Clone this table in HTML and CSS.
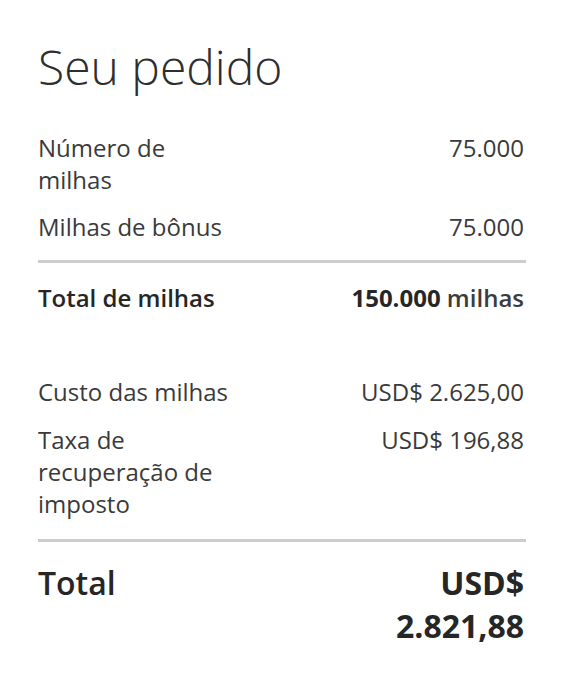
FILE: index.html
```html
<!DOCTYPE html>
<html lang="pt">
<head>
<meta charset="utf-8">
<link rel="stylesheet" href="styles.css">
</head>
<body>
<div class="order">
  <h1 class="title">Seu pedido</h1>
  <div class="group">
    <div class="row">
      <div class="label">Número de milhas</div>
      <div class="value">75.000</div>
    </div>
    <div class="row">
      <div class="label">Milhas de bônus</div>
      <div class="value">75.000</div>
    </div>
  </div>
  <hr class="divider">
  <div class="row row-strong">
    <div class="label">Total de milhas</div>
    <div class="value"><span class="num">150.000</span> <span class="unit">milhas</span></div>
  </div>
  <div class="group group-cost">
    <div class="row">
      <div class="label">Custo das milhas</div>
      <div class="value">USD$ 2.625,00</div>
    </div>
    <div class="row">
      <div class="label">Taxa de recuperação de imposto</div>
      <div class="value">USD$ 196,88</div>
    </div>
  </div>
  <hr class="divider">
  <div class="row row-total">
    <div class="label">Total</div>
    <div class="value">USD$ 2.821,88</div>
  </div>
</div>
</body>
</html>
```
FILE: styles.css
```css
html, body {
  margin: 0;
  padding: 0;
  background: #ffffff;
}
body {
  font-family: "Open Sans", "Noto Sans", sans-serif;
  color: #3a3a3a;
}
.order {
  width: 488px;
  padding: 38px 0 0 38px;
}
.title {
  margin: 0;
  font-size: 48px;
  line-height: 58px;
  font-weight: 300;
  color: #2e2e2e;
}
.group {
  display: flex;
  flex-direction: column;
  gap: 15px;
  margin-top: 36px;
}
.row {
  display: flex;
  justify-content: space-between;
  align-items: flex-start;
  font-size: 24px;
  line-height: 32px;
}
.label {
  width: 195px;
}
.value {
  text-align: right;
  padding-right: 2px;
}
.divider {
  margin: 17px 0 0 0;
  border: 0;
  height: 3px;
  background: #cdcdcd;
}
.row-strong {
  margin-top: 19px;
  color: #262626;
}
.row-strong .label {
  font-weight: 600;
}
.row-strong .num {
  font-weight: 700;
}
.row-strong .unit {
  font-weight: 600;
  color: #3c3c3c;
}
.group-cost {
  margin-top: 62px;
  gap: 16px;
}
.group-cost + .divider {
  margin-top: 19px;
}
.row-total {
  margin-top: 19px;
  font-size: 32px;
  line-height: 43px;
  color: #262626;
}
.row-total .label {
  font-weight: 600;
}
.row-total .value {
  width: 160px;
  font-weight: 700;
}
```
